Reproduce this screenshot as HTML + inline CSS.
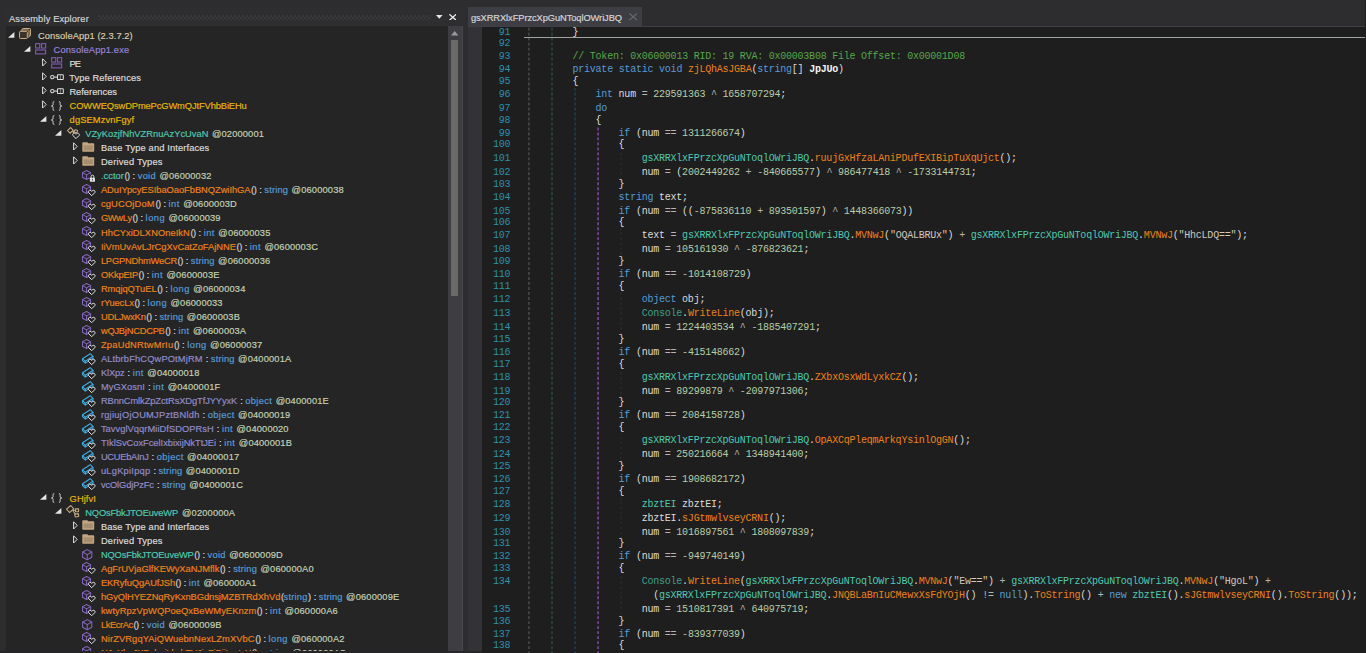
<!DOCTYPE html>
<html><head><meta charset="utf-8"><title>dnSpy</title>
<style>
html,body{margin:0;padding:0}
body{width:1366px;height:653px;overflow:hidden;background:#2d2d30;position:relative;font-family:"Liberation Sans",sans-serif}
div,span,svg{position:absolute}
.t{-webkit-text-stroke:0.18px;white-space:pre;font-size:9.3px;line-height:14px;height:14px;top:0.6px}
.i{overflow:visible}
.r{left:0;width:447px;height:14px}
.cl{left:0;white-space:pre;font-family:"Liberation Mono",monospace;font-size:10.0px;line-height:13px;height:13px;letter-spacing:-0.23px;color:#dcdcdc}
.cl b{font-weight:bold;color:#f4f4f4}
.cl i{font-style:normal}
.n{left:14.3px;width:28.5px;text-align:right;color:#2b91af}
.c{white-space:pre}
.g{width:1.4px;background-size:1.4px 5px}
</style></head><body>
<svg width="0" height="0" style="left:-10px"><defs>
<symbol id="i-asm" viewBox="0 0 12 11" overflow="visible"><g fill="none" stroke="#c9ad84" stroke-width="1"><path d="M3.4 2.1V1.2Q3.4 0.5 4.1 0.5H10.8Q11.5 0.5 11.5 1.2V7.4Q11.5 8.1 10.8 8.1H10"/><path d="M1.9 3.3V2.7Q1.9 2 2.6 2H9.3Q10 2 10 2.7V8.6Q10 9.3 9.3 9.3H8.6"/><rect x="0.5" y="3.4" width="7.8" height="7.1" rx="0.9" fill="#3b3229"/></g></symbol>
<symbol id="i-mod" viewBox="0 0 11.4 11.6" overflow="visible"><g fill="none" stroke="#7f5bb2" stroke-width="1.1"><rect x="0.65" y="0.65" width="4.1" height="4.4"/><rect x="6.55" y="0.65" width="4.1" height="4.4"/><rect x="0.65" y="7" width="10" height="3.9"/></g></symbol>
<symbol id="i-ref" viewBox="0 0 14 6" overflow="visible"><g fill="none" stroke="#dadada" stroke-width="1.05"><circle cx="2.3" cy="3.1" r="1.7"/><path d="M4 3.1H7.4"/><rect x="7.5" y="0.7" width="5.8" height="4.7" rx="0.5"/><path d="M10.4 0.7V5.4" stroke-width="0.7" opacity=".7"/></g></symbol>
<symbol id="i-ns" viewBox="0 0 11.2 10" overflow="visible"><g fill="none" stroke="#d4d4d4" stroke-width="1"><path d="M3.3 0.5C1.7 0.5 2.1 2 2.1 3.2C2.1 4.4 1.5 5 0.4 5C1.5 5 2.1 5.6 2.1 6.8C2.1 8 1.7 9.5 3.3 9.5"/><path d="M7.9 0.5C9.5 0.5 9.1 2 9.1 3.2C9.1 4.4 9.7 5 10.8 5C9.7 5 9.1 5.6 9.1 6.8C9.1 8 9.5 9.5 7.9 9.5"/></g></symbol>
<symbol id="i-cls" viewBox="0 0 13 12.4" overflow="visible"><g fill="none" stroke="#c9ad84" stroke-width="1.05" stroke-linejoin="round"><path d="M0.5 4.1L4.8 0.5L7.8 3.8L3.5 7.5Z"/><path d="M6.5 5.4L9.5 5.3M7 6L9.6 9.4"/><rect x="9.5" y="3.9" width="3.1" height="2.8" rx="0.4"/><rect x="8.9" y="8.9" width="3.7" height="2.9" rx="0.4" transform="rotate(-12 10.7 10.3)"/></g></symbol>
<symbol id="i-clsh" viewBox="0 0 13 12" overflow="visible"><g fill="none" stroke="#c9ad84" stroke-width="1.05"><path d="M0.5 3.6L3.6 0.6L6.2 3.2L3.1 6.2Z"/><path d="M5.2 4.2L7.4 4.8M6 5L7 7"/><rect x="7.5" y="2.9" width="2.8" height="2.6" rx="0.5" transform="rotate(14 8.9 4.2)"/></g><path d="M9 11.6L5.9 8.5C5.1 7.5 6.1 5.9 7.5 6.2C8.3 6.4 9 7.2 9 7.2C9 7.2 9.7 6.4 10.5 6.2C11.9 5.9 12.9 7.5 12.1 8.5Z" fill="#252526" stroke="#e2e2e2" stroke-width="1"/></symbol>
<symbol id="i-fold" viewBox="0 0 12.4 10" overflow="visible"><path d="M0.3 1.1Q0.3 0.3 1.1 0.3H5.2Q5.9 0.3 6.1 1.3H11.4Q12.2 1.3 12.2 2.1V9Q12.2 9.8 11.4 9.8H1.1Q0.3 9.8 0.3 9Z" fill="#c2a680"/><rect x="1.7" y="3.4" width="9.2" height="4.8" fill="#a0886a" opacity=".8"/></symbol>
<symbol id="i-m" viewBox="0 0 13.4 12" overflow="visible"><g fill="none" stroke="#8466bc" stroke-width="1.05" stroke-linejoin="round"><path d="M4.55 0.5L8.6 2.6V7.3L4.55 9.5L0.5 7.3V2.6Z"/><path d="M0.5 2.6L4.55 4.9L8.6 2.6M4.55 4.9V9.5"/></g></symbol>
<symbol id="i-mh" viewBox="0 0 13.4 12" overflow="visible"><use href="#i-m"/><path d="M9.7 11.7L6.6 8.6C5.8 7.6 6.8 6 8.2 6.3C9 6.5 9.7 7.3 9.7 7.3C9.7 7.3 10.4 6.5 11.2 6.3C12.6 6 13.6 7.6 12.8 8.6Z" fill="#252526" stroke="#e2e2e2" stroke-width="1"/></symbol>
<symbol id="i-mlock" viewBox="0 0 13.4 12" overflow="visible"><use href="#i-m"/><rect x="7.3" y="4.4" width="6.1" height="7.6" fill="#252526"/><path d="M9.1 8V6.5A1.35 1.35 0 0 1 11.8 6.5V8" fill="none" stroke="#e2e2e2" stroke-width="1"/><rect x="7.9" y="7.8" width="5.1" height="3.9" rx="0.4" fill="#e2e2e2"/><rect x="10" y="8.9" width="0.9" height="1.6" fill="#444"/></symbol>
<symbol id="i-fh" viewBox="0 0 13.4 12" overflow="visible"><g fill="none" stroke="#3fa9de" stroke-width="1.1" stroke-linejoin="round"><path d="M0.5 5.7L8.2 0.7L11 3.3L3.3 8.3Z"/><path d="M0.5 5.7V7.6L3.3 10.1V8.3M3.3 10.1L11 5.2V3.3"/></g><path d="M9.7 11.7L6.6 8.6C5.8 7.6 6.8 6 8.2 6.3C9 6.5 9.7 7.3 9.7 7.3C9.7 7.3 10.4 6.5 11.2 6.3C12.6 6 13.6 7.6 12.8 8.6Z" fill="#252526" stroke="#e2e2e2" stroke-width="1"/></symbol>
<symbol id="i-mbig" viewBox="0 0 10.4 11.4" overflow="visible"><g fill="none" stroke="#8466bc" stroke-width="1.05" stroke-linejoin="round"><path d="M5.2 0.6L9.8 3V8.3L5.2 10.8L0.6 8.3V3Z"/><path d="M0.6 3L5.2 5.6L9.8 3M5.2 5.6V10.8"/></g></symbol>
</defs>
</svg>
<div style="left:5.5px;top:7px;width:457px;height:19.5px;background:#2e2e31"></div>
<div style="left:5.5px;top:26.3px;width:442px;height:625px;background:#252526;overflow:hidden" id="tree">
<div class="r" style="top:2.2px"><svg class="i" style="left:2.2px;top:3.1px" width="6.4" height="5.8"><path d="M6.4 0V5.8H0Z" fill="#e4e4e4"/></svg><svg class="i" style="left:13.8px;top:-0.1px" width="12" height="11"><use href="#i-asm"/></svg><span class="t" style="left:32.5px;color:#dacaa8;letter-spacing:0.084px">ConsoleApp1 (2.3.7.2)</span></div>
<div class="r" style="top:16.2px"><svg class="i" style="left:18.3px;top:3.1px" width="6.4" height="5.8"><path d="M6.4 0V5.8H0Z" fill="#e4e4e4"/></svg><svg class="i" style="left:29.9px;top:0.7px" width="11.4" height="11.6"><use href="#i-mod"/></svg><span class="t" style="left:48.1px;color:#9683d8;letter-spacing:0.153px">ConsoleApp1.exe</span></div>
<div class="r" style="top:30.2px"><svg class="i" style="left:36.3px;top:1.8px" width="5" height="9"><path d="M0.6 0.8L4.2 4.4L0.6 8Z" fill="none" stroke="#e0e0e0" stroke-width="1"/></svg><svg class="i" style="left:45.7px;top:0.7px" width="11.4" height="11.6"><use href="#i-mod"/></svg><span class="t" style="left:63.9px;color:#dcdcdc;letter-spacing:-0.803px">PE</span></div>
<div class="r" style="top:44.2px"><svg class="i" style="left:36.3px;top:1.8px" width="5" height="9"><path d="M0.6 0.8L4.2 4.4L0.6 8Z" fill="none" stroke="#e0e0e0" stroke-width="1"/></svg><svg class="i" style="left:44.7px;top:3.1px" width="14" height="6"><use href="#i-ref"/></svg><span class="t" style="left:63.7px;color:#dcdcdc;letter-spacing:0.095px">Type References</span></div>
<div class="r" style="top:58.3px"><svg class="i" style="left:36.3px;top:1.8px" width="5" height="9"><path d="M0.6 0.8L4.2 4.4L0.6 8Z" fill="none" stroke="#e0e0e0" stroke-width="1"/></svg><svg class="i" style="left:44.7px;top:3.1px" width="14" height="6"><use href="#i-ref"/></svg><span class="t" style="left:63.9px;color:#dcdcdc;letter-spacing:0.005px">References</span></div>
<div class="r" style="top:72.3px"><svg class="i" style="left:36.3px;top:1.8px" width="5" height="9"><path d="M0.6 0.8L4.2 4.4L0.6 8Z" fill="none" stroke="#e0e0e0" stroke-width="1"/></svg><svg class="i" style="left:45.8px;top:2.0px" width="11.2" height="10"><use href="#i-ns"/></svg><span class="t" style="left:64.1px;color:#e6b800;letter-spacing:-0.092px">COWWEQswDPmePcGWmQJtFVhbBiEHu</span></div>
<div class="r" style="top:86.3px"><svg class="i" style="left:34.1px;top:3.1px" width="6.4" height="5.8"><path d="M6.4 0V5.8H0Z" fill="#e4e4e4"/></svg><svg class="i" style="left:45.8px;top:2.0px" width="11.2" height="10"><use href="#i-ns"/></svg><span class="t" style="left:64.1px;color:#e6b800;letter-spacing:0.129px">dgSEMzvnFgyf</span></div>
<div class="r" style="top:100.3px"><svg class="i" style="left:49.9px;top:3.1px" width="6.4" height="5.8"><path d="M6.4 0V5.8H0Z" fill="#e4e4e4"/></svg><svg class="i" style="left:61.2px;top:0.8px" width="13" height="12"><use href="#i-clsh"/></svg><span class="t" style="left:79.7px;color:#4ec9b0;letter-spacing:0.010px">VZyKozjfNhVZRnuAzYcUvaN</span><span class="t" style="left:206.4px;color:#c2d2b4;letter-spacing:0.154px">@02000001</span></div>
<div class="r" style="top:114.3px"><svg class="i" style="left:67.7px;top:1.8px" width="5" height="9"><path d="M0.6 0.8L4.2 4.4L0.6 8Z" fill="none" stroke="#e0e0e0" stroke-width="1"/></svg><svg class="i" style="left:76.7px;top:1.4px" width="12.4" height="10"><use href="#i-fold"/></svg><span class="t" style="left:95.4px;color:#dcdcdc;letter-spacing:0.135px">Base Type and Interfaces</span></div>
<div class="r" style="top:128.3px"><svg class="i" style="left:67.7px;top:1.8px" width="5" height="9"><path d="M0.6 0.8L4.2 4.4L0.6 8Z" fill="none" stroke="#e0e0e0" stroke-width="1"/></svg><svg class="i" style="left:76.7px;top:1.4px" width="12.4" height="10"><use href="#i-fold"/></svg><span class="t" style="left:95.4px;color:#dcdcdc;letter-spacing:0.195px">Derived Types</span></div>
<div class="r" style="top:142.3px"><svg class="i" style="left:76.7px;top:1.3px" width="13.4" height="12"><use href="#i-mlock"/></svg><span class="t" style="left:95.4px;color:#4ec9b0;letter-spacing:0.044px">.cctor</span><span class="t" style="left:119.0px;color:#cfcfcf;letter-spacing:-0.502px">()</span><span class="t" style="left:127.1px;color:#dcdcdc;letter-spacing:-0.994px">:</span><span class="t" style="left:132.2px;color:#569cd6;letter-spacing:0.309px">void</span><span class="t" style="left:153.9px;color:#c2d2b4;letter-spacing:0.154px">@06000032</span></div>
<div class="r" style="top:156.4px"><svg class="i" style="left:76.7px;top:1.3px" width="13.4" height="12"><use href="#i-mh"/></svg><span class="t" style="left:95.4px;color:#ee8216;letter-spacing:-0.021px">ADuIYpcyESIbaOaoFbBNQZwiIhGA</span><span class="t" style="left:245.6px;color:#cfcfcf;letter-spacing:-0.502px">()</span><span class="t" style="left:253.7px;color:#dcdcdc;letter-spacing:-0.994px">:</span><span class="t" style="left:258.8px;color:#569cd6;letter-spacing:0.194px">string</span><span class="t" style="left:286.1px;color:#c2d2b4;letter-spacing:0.154px">@06000038</span></div>
<div class="r" style="top:170.5px"><svg class="i" style="left:76.7px;top:1.3px" width="13.4" height="12"><use href="#i-mh"/></svg><span class="t" style="left:95.4px;color:#ee8216;letter-spacing:0.190px">cgUCOjDoM</span><span class="t" style="left:149.9px;color:#cfcfcf;letter-spacing:-0.502px">()</span><span class="t" style="left:158.0px;color:#dcdcdc;letter-spacing:-0.994px">:</span><span class="t" style="left:163.1px;color:#569cd6;letter-spacing:0.457px">int</span><span class="t" style="left:177.7px;color:#c2d2b4;letter-spacing:0.154px">@0600003D</span></div>
<div class="r" style="top:184.6px"><svg class="i" style="left:76.7px;top:1.3px" width="13.4" height="12"><use href="#i-mh"/></svg><span class="t" style="left:95.4px;color:#ee8216;letter-spacing:-0.261px">GWwLy</span><span class="t" style="left:126.9px;color:#cfcfcf;letter-spacing:-0.502px">()</span><span class="t" style="left:135.0px;color:#dcdcdc;letter-spacing:-0.994px">:</span><span class="t" style="left:140.1px;color:#569cd6;letter-spacing:0.480px">long</span><span class="t" style="left:163.0px;color:#c2d2b4;letter-spacing:0.154px">@06000039</span></div>
<div class="r" style="top:198.7px"><svg class="i" style="left:76.7px;top:1.3px" width="13.4" height="12"><use href="#i-mh"/></svg><span class="t" style="left:95.4px;color:#ee8216;letter-spacing:0.072px">HhCYxiDLXNOneIkN</span><span class="t" style="left:185.0px;color:#cfcfcf;letter-spacing:-0.502px">()</span><span class="t" style="left:193.1px;color:#dcdcdc;letter-spacing:-0.994px">:</span><span class="t" style="left:198.2px;color:#569cd6;letter-spacing:0.457px">int</span><span class="t" style="left:212.8px;color:#c2d2b4;letter-spacing:0.154px">@06000035</span></div>
<div class="r" style="top:212.7px"><svg class="i" style="left:76.7px;top:1.3px" width="13.4" height="12"><use href="#i-mh"/></svg><span class="t" style="left:95.4px;color:#ee8216;letter-spacing:0.016px">IiVmUvAvLJrCgXvCatZoFAjNNE</span><span class="t" style="left:231.1px;color:#cfcfcf;letter-spacing:-0.502px">()</span><span class="t" style="left:239.2px;color:#dcdcdc;letter-spacing:-0.994px">:</span><span class="t" style="left:244.3px;color:#569cd6;letter-spacing:0.457px">int</span><span class="t" style="left:258.9px;color:#c2d2b4;letter-spacing:0.154px">@0600003C</span></div>
<div class="r" style="top:226.8px"><svg class="i" style="left:76.7px;top:1.3px" width="13.4" height="12"><use href="#i-mh"/></svg><span class="t" style="left:95.4px;color:#ee8216;letter-spacing:-0.188px">LPGPNDhmWeCR</span><span class="t" style="left:172.1px;color:#cfcfcf;letter-spacing:-0.502px">()</span><span class="t" style="left:180.2px;color:#dcdcdc;letter-spacing:-0.994px">:</span><span class="t" style="left:185.3px;color:#569cd6;letter-spacing:0.194px">string</span><span class="t" style="left:212.6px;color:#c2d2b4;letter-spacing:0.154px">@06000036</span></div>
<div class="r" style="top:240.9px"><svg class="i" style="left:76.7px;top:1.3px" width="13.4" height="12"><use href="#i-mh"/></svg><span class="t" style="left:95.4px;color:#ee8216;letter-spacing:-0.164px">OKkpEtP</span><span class="t" style="left:133.1px;color:#cfcfcf;letter-spacing:-0.502px">()</span><span class="t" style="left:141.2px;color:#dcdcdc;letter-spacing:-0.994px">:</span><span class="t" style="left:146.3px;color:#569cd6;letter-spacing:0.457px">int</span><span class="t" style="left:160.9px;color:#c2d2b4;letter-spacing:0.154px">@0600003E</span></div>
<div class="r" style="top:255.0px"><svg class="i" style="left:76.7px;top:1.3px" width="13.4" height="12"><use href="#i-mh"/></svg><span class="t" style="left:95.4px;color:#ee8216;letter-spacing:-0.028px">RmqjqQTuEL</span><span class="t" style="left:151.7px;color:#cfcfcf;letter-spacing:-0.502px">()</span><span class="t" style="left:159.8px;color:#dcdcdc;letter-spacing:-0.994px">:</span><span class="t" style="left:164.9px;color:#569cd6;letter-spacing:0.480px">long</span><span class="t" style="left:187.8px;color:#c2d2b4;letter-spacing:0.154px">@06000034</span></div>
<div class="r" style="top:269.1px"><svg class="i" style="left:76.7px;top:1.3px" width="13.4" height="12"><use href="#i-mh"/></svg><span class="t" style="left:95.4px;color:#ee8216;letter-spacing:-0.099px">rYuecLx</span><span class="t" style="left:128.9px;color:#cfcfcf;letter-spacing:-0.502px">()</span><span class="t" style="left:137.0px;color:#dcdcdc;letter-spacing:-0.994px">:</span><span class="t" style="left:142.1px;color:#569cd6;letter-spacing:0.480px">long</span><span class="t" style="left:165.0px;color:#c2d2b4;letter-spacing:0.154px">@06000033</span></div>
<div class="r" style="top:283.1px"><svg class="i" style="left:76.7px;top:1.3px" width="13.4" height="12"><use href="#i-mh"/></svg><span class="t" style="left:95.4px;color:#ee8216;letter-spacing:-0.148px">UDLJwxKn</span><span class="t" style="left:140.8px;color:#cfcfcf;letter-spacing:-0.502px">()</span><span class="t" style="left:148.9px;color:#dcdcdc;letter-spacing:-0.994px">:</span><span class="t" style="left:154.0px;color:#569cd6;letter-spacing:0.194px">string</span><span class="t" style="left:181.3px;color:#c2d2b4;letter-spacing:0.154px">@0600003B</span></div>
<div class="r" style="top:297.2px"><svg class="i" style="left:76.7px;top:1.3px" width="13.4" height="12"><use href="#i-mh"/></svg><span class="t" style="left:95.4px;color:#ee8216;letter-spacing:-0.220px">wQJBjNCDCPB</span><span class="t" style="left:159.7px;color:#cfcfcf;letter-spacing:-0.502px">()</span><span class="t" style="left:167.8px;color:#dcdcdc;letter-spacing:-0.994px">:</span><span class="t" style="left:172.9px;color:#569cd6;letter-spacing:0.457px">int</span><span class="t" style="left:187.5px;color:#c2d2b4;letter-spacing:0.154px">@0600003A</span></div>
<div class="r" style="top:311.3px"><svg class="i" style="left:76.7px;top:1.3px" width="13.4" height="12"><use href="#i-mh"/></svg><span class="t" style="left:95.4px;color:#ee8216;letter-spacing:0.251px">ZpaUdNRtwMrIu</span><span class="t" style="left:168.5px;color:#cfcfcf;letter-spacing:-0.502px">()</span><span class="t" style="left:176.6px;color:#dcdcdc;letter-spacing:-0.994px">:</span><span class="t" style="left:181.7px;color:#569cd6;letter-spacing:0.480px">long</span><span class="t" style="left:204.6px;color:#c2d2b4;letter-spacing:0.154px">@06000037</span></div>
<div class="r" style="top:325.4px"><svg class="i" style="left:76.7px;top:1.3px" width="13.4" height="12"><use href="#i-fh"/></svg><span class="t" style="left:95.4px;color:#938cc8;letter-spacing:0.145px">ALtbrbFhCQwPOtMjRM</span><span class="t" style="left:200.2px;color:#dcdcdc;letter-spacing:-0.994px">:</span><span class="t" style="left:205.3px;color:#569cd6;letter-spacing:0.194px">string</span><span class="t" style="left:232.6px;color:#c2d2b4;letter-spacing:0.154px">@0400001A</span></div>
<div class="r" style="top:339.5px"><svg class="i" style="left:76.7px;top:1.3px" width="13.4" height="12"><use href="#i-fh"/></svg><span class="t" style="left:95.4px;color:#938cc8;letter-spacing:-0.119px">KlXpz</span><span class="t" style="left:122.1px;color:#dcdcdc;letter-spacing:-0.994px">:</span><span class="t" style="left:127.2px;color:#569cd6;letter-spacing:0.457px">int</span><span class="t" style="left:141.8px;color:#c2d2b4;letter-spacing:0.154px">@04000018</span></div>
<div class="r" style="top:353.5px"><svg class="i" style="left:76.7px;top:1.3px" width="13.4" height="12"><use href="#i-fh"/></svg><span class="t" style="left:95.4px;color:#938cc8;letter-spacing:0.087px">MyGXosnI</span><span class="t" style="left:142.5px;color:#dcdcdc;letter-spacing:-0.994px">:</span><span class="t" style="left:147.6px;color:#569cd6;letter-spacing:0.457px">int</span><span class="t" style="left:162.2px;color:#c2d2b4;letter-spacing:0.154px">@0400001F</span></div>
<div class="r" style="top:367.5px"><svg class="i" style="left:76.7px;top:1.3px" width="13.4" height="12"><use href="#i-fh"/></svg><span class="t" style="left:95.4px;color:#938cc8;letter-spacing:-0.083px">RBnnCmlkZpZctRsXDgTfJYYyxK</span><span class="t" style="left:234.7px;color:#dcdcdc;letter-spacing:-0.994px">:</span><span class="t" style="left:239.8px;color:#569cd6;letter-spacing:0.365px">object</span><span class="t" style="left:270.2px;color:#c2d2b4;letter-spacing:0.154px">@0400001E</span></div>
<div class="r" style="top:381.5px"><svg class="i" style="left:76.7px;top:1.3px" width="13.4" height="12"><use href="#i-fh"/></svg><span class="t" style="left:95.4px;color:#938cc8;letter-spacing:0.233px">rgjiujOjOUMJPztBNldh</span><span class="t" style="left:197.1px;color:#dcdcdc;letter-spacing:-0.994px">:</span><span class="t" style="left:202.2px;color:#569cd6;letter-spacing:0.365px">object</span><span class="t" style="left:232.6px;color:#c2d2b4;letter-spacing:0.154px">@04000019</span></div>
<div class="r" style="top:395.5px"><svg class="i" style="left:76.7px;top:1.3px" width="13.4" height="12"><use href="#i-fh"/></svg><span class="t" style="left:95.4px;color:#938cc8;letter-spacing:0.059px">TavvglVqqrMiiDfSDOPRsH</span><span class="t" style="left:211.3px;color:#dcdcdc;letter-spacing:-0.994px">:</span><span class="t" style="left:216.4px;color:#569cd6;letter-spacing:0.457px">int</span><span class="t" style="left:231.0px;color:#c2d2b4;letter-spacing:0.154px">@04000020</span></div>
<div class="r" style="top:409.5px"><svg class="i" style="left:76.7px;top:1.3px" width="13.4" height="12"><use href="#i-fh"/></svg><span class="t" style="left:95.4px;color:#938cc8;letter-spacing:-0.019px">TIklSvCoxFcelIxbixijNkTtJEi</span><span class="t" style="left:213.6px;color:#dcdcdc;letter-spacing:-0.994px">:</span><span class="t" style="left:218.7px;color:#569cd6;letter-spacing:0.457px">int</span><span class="t" style="left:233.3px;color:#c2d2b4;letter-spacing:0.154px">@0400001B</span></div>
<div class="r" style="top:422.7px"><svg class="i" style="left:76.7px;top:1.3px" width="13.4" height="12"><use href="#i-fh"/></svg><span class="t" style="left:95.4px;color:#938cc8;letter-spacing:-0.269px">UCUEbAInJ</span><span class="t" style="left:146.1px;color:#dcdcdc;letter-spacing:-0.994px">:</span><span class="t" style="left:151.2px;color:#569cd6;letter-spacing:0.365px">object</span><span class="t" style="left:181.6px;color:#c2d2b4;letter-spacing:0.154px">@04000017</span></div>
<div class="r" style="top:436.7px"><svg class="i" style="left:76.7px;top:1.3px" width="13.4" height="12"><use href="#i-fh"/></svg><span class="t" style="left:95.4px;color:#938cc8;letter-spacing:0.245px">uLgKpiIpqp</span><span class="t" style="left:147.9px;color:#dcdcdc;letter-spacing:-0.994px">:</span><span class="t" style="left:153.0px;color:#569cd6;letter-spacing:0.194px">string</span><span class="t" style="left:180.3px;color:#c2d2b4;letter-spacing:0.154px">@0400001D</span></div>
<div class="r" style="top:450.7px"><svg class="i" style="left:76.7px;top:1.3px" width="13.4" height="12"><use href="#i-fh"/></svg><span class="t" style="left:95.4px;color:#938cc8;letter-spacing:-0.114px">vcOlGdjPzFc</span><span class="t" style="left:151.4px;color:#dcdcdc;letter-spacing:-0.994px">:</span><span class="t" style="left:156.5px;color:#569cd6;letter-spacing:0.194px">string</span><span class="t" style="left:183.8px;color:#c2d2b4;letter-spacing:0.154px">@0400001C</span></div>
<div class="r" style="top:464.7px"><svg class="i" style="left:34.1px;top:3.1px" width="6.4" height="5.8"><path d="M6.4 0V5.8H0Z" fill="#e4e4e4"/></svg><svg class="i" style="left:45.8px;top:2.0px" width="11.2" height="10"><use href="#i-ns"/></svg><span class="t" style="left:64.1px;color:#e6b800;letter-spacing:0.079px">GHjfvI</span></div>
<div class="r" style="top:478.7px"><svg class="i" style="left:49.9px;top:3.1px" width="6.4" height="5.8"><path d="M6.4 0V5.8H0Z" fill="#e4e4e4"/></svg><svg class="i" style="left:60.3px;top:0.5px" width="13" height="12.4"><use href="#i-cls"/></svg><span class="t" style="left:79.7px;color:#4ec9b0;letter-spacing:-0.124px">NQOsFbkJTOEuveWP</span><span class="t" style="left:176.5px;color:#c2d2b4;letter-spacing:0.154px">@0200000A</span></div>
<div class="r" style="top:492.7px"><svg class="i" style="left:67.7px;top:1.8px" width="5" height="9"><path d="M0.6 0.8L4.2 4.4L0.6 8Z" fill="none" stroke="#e0e0e0" stroke-width="1"/></svg><svg class="i" style="left:76.7px;top:1.4px" width="12.4" height="10"><use href="#i-fold"/></svg><span class="t" style="left:95.4px;color:#dcdcdc;letter-spacing:0.135px">Base Type and Interfaces</span></div>
<div class="r" style="top:506.7px"><svg class="i" style="left:67.7px;top:1.8px" width="5" height="9"><path d="M0.6 0.8L4.2 4.4L0.6 8Z" fill="none" stroke="#e0e0e0" stroke-width="1"/></svg><svg class="i" style="left:76.7px;top:1.4px" width="12.4" height="10"><use href="#i-fold"/></svg><span class="t" style="left:95.4px;color:#dcdcdc;letter-spacing:0.195px">Derived Types</span></div>
<div class="r" style="top:520.8px"><svg class="i" style="left:76.7px;top:1.8px" width="10.4" height="11.4"><use href="#i-mbig"/></svg><span class="t" style="left:95.4px;color:#4ec9b0;letter-spacing:-0.131px">NQOsFbkJTOEuveWP</span><span class="t" style="left:188.8px;color:#cfcfcf;letter-spacing:-0.502px">()</span><span class="t" style="left:196.9px;color:#dcdcdc;letter-spacing:-0.994px">:</span><span class="t" style="left:202.0px;color:#569cd6;letter-spacing:0.309px">void</span><span class="t" style="left:223.7px;color:#c2d2b4;letter-spacing:0.154px">@0600009D</span></div>
<div class="r" style="top:534.8px"><svg class="i" style="left:76.7px;top:1.3px" width="13.4" height="12"><use href="#i-mh"/></svg><span class="t" style="left:95.4px;color:#ee8216;letter-spacing:0.035px">AgFrUVjaGlfKEWyXaNJMflk</span><span class="t" style="left:214.5px;color:#cfcfcf;letter-spacing:-0.502px">()</span><span class="t" style="left:222.6px;color:#dcdcdc;letter-spacing:-0.994px">:</span><span class="t" style="left:227.7px;color:#569cd6;letter-spacing:0.194px">string</span><span class="t" style="left:255.0px;color:#c2d2b4;letter-spacing:0.154px">@060000A0</span></div>
<div class="r" style="top:548.8px"><svg class="i" style="left:76.7px;top:1.3px" width="13.4" height="12"><use href="#i-mh"/></svg><span class="t" style="left:95.4px;color:#ee8216;letter-spacing:-0.096px">EKRyfuQgAUfJSh</span><span class="t" style="left:170.1px;color:#cfcfcf;letter-spacing:-0.502px">()</span><span class="t" style="left:178.2px;color:#dcdcdc;letter-spacing:-0.994px">:</span><span class="t" style="left:183.3px;color:#569cd6;letter-spacing:0.457px">int</span><span class="t" style="left:197.9px;color:#c2d2b4;letter-spacing:0.154px">@060000A1</span></div>
<div class="r" style="top:562.8px"><svg class="i" style="left:76.7px;top:1.3px" width="13.4" height="12"><use href="#i-mh"/></svg><span class="t" style="left:95.4px;color:#ee8216;letter-spacing:-0.045px">hGyQlHYEZNqRyKxnBGdnsjMZBTRdXhVd</span><span class="t" style="left:275.4px;color:#cfcfcf;letter-spacing:-0.809px">(</span><span class="t" style="left:278.1px;color:#569cd6;letter-spacing:0.194px">string</span><span class="t" style="left:302.5px;color:#cfcfcf;letter-spacing:-0.809px">)</span><span class="t" style="left:308.2px;color:#dcdcdc;letter-spacing:-0.994px">:</span><span class="t" style="left:313.3px;color:#569cd6;letter-spacing:0.194px">string</span><span class="t" style="left:340.6px;color:#c2d2b4;letter-spacing:0.154px">@0600009E</span></div>
<div class="r" style="top:576.8px"><svg class="i" style="left:76.7px;top:1.3px" width="13.4" height="12"><use href="#i-mh"/></svg><span class="t" style="left:95.4px;color:#ee8216;letter-spacing:0.072px">kwtyRpzVpWQPoeQxBeWMyEKnzm</span><span class="t" style="left:251.3px;color:#cfcfcf;letter-spacing:-0.502px">()</span><span class="t" style="left:259.4px;color:#dcdcdc;letter-spacing:-0.994px">:</span><span class="t" style="left:264.5px;color:#569cd6;letter-spacing:0.457px">int</span><span class="t" style="left:279.1px;color:#c2d2b4;letter-spacing:0.154px">@060000A6</span></div>
<div class="r" style="top:590.8px"><svg class="i" style="left:76.7px;top:1.8px" width="10.4" height="11.4"><use href="#i-mbig"/></svg><span class="t" style="left:95.4px;color:#ee8216;letter-spacing:-0.375px">LkEcrAc</span><span class="t" style="left:128.0px;color:#cfcfcf;letter-spacing:-0.502px">()</span><span class="t" style="left:136.1px;color:#dcdcdc;letter-spacing:-0.994px">:</span><span class="t" style="left:141.2px;color:#569cd6;letter-spacing:0.309px">void</span><span class="t" style="left:162.9px;color:#c2d2b4;letter-spacing:0.154px">@0600009B</span></div>
<div class="r" style="top:604.8px"><svg class="i" style="left:76.7px;top:1.3px" width="13.4" height="12"><use href="#i-mh"/></svg><span class="t" style="left:95.4px;color:#ee8216;letter-spacing:0.121px">NirZVRgqYAiQWuebnNexLZmXVbC</span><span class="t" style="left:249.8px;color:#cfcfcf;letter-spacing:-0.502px">()</span><span class="t" style="left:257.9px;color:#dcdcdc;letter-spacing:-0.994px">:</span><span class="t" style="left:263.0px;color:#569cd6;letter-spacing:0.480px">long</span><span class="t" style="left:285.9px;color:#c2d2b4;letter-spacing:0.154px">@060000A2</span></div>
<div class="r" style="top:618.9px"><svg class="i" style="left:76.7px;top:1.3px" width="13.4" height="12"><use href="#i-mh"/></svg><span class="t" style="left:95.4px;color:#ee8216;letter-spacing:-0.131px">NJeXlmJXPahujLkchTVJjvFiBijLmtzY</span><span class="t" style="left:246.3px;color:#cfcfcf;letter-spacing:-0.502px">()</span><span class="t" style="left:254.4px;color:#dcdcdc;letter-spacing:-0.994px">:</span><span class="t" style="left:259.5px;color:#569cd6;letter-spacing:0.194px">string</span><span class="t" style="left:286.8px;color:#c2d2b4;letter-spacing:0.154px">@060000A5</span></div>
</div>
<div style="left:0;top:11.1px;width:460px;height:14px"><span class="t" style="left:9.0px;color:#dcdcdc;letter-spacing:0.141px;color:#d4d4d4">Assembly Explorer</span></div>
<div style="left:97.5px;top:15px;width:333px;height:5px;opacity:.38;background-image:radial-gradient(circle at 1px 1px,#5a5a5e 0.6px,transparent 0.9px),radial-gradient(circle at 1px 1px,#5a5a5e 0.6px,transparent 0.9px);background-size:4px 4px,4px 4px;background-position:0 0,2px 2px"></div>
<svg style="left:436.2px;top:15.2px" width="6.6" height="3.8"><path d="M0 0H6.6L3.3 3.8Z" fill="#e6e6e6"/></svg>
<svg style="left:448.8px;top:13.7px" width="7.6" height="6.6"><path d="M0.4 0.3L7.2 6.3M7.2 0.3L0.4 6.3" stroke="#f2f2f2" stroke-width="1.25" fill="none"/></svg>
<div style="left:447.5px;top:26.3px;width:15px;height:625px;background:#3e3e42"></div>
<div style="left:461.6px;top:26.3px;width:0.9px;height:625px;background:#47474c"></div>
<svg style="left:451px;top:31px" width="7.4" height="4.6"><path d="M0 4.6L3.7 0L7.4 4.6Z" fill="#9a9a9e"/></svg>
<div style="left:450.9px;top:40px;width:7.2px;height:256px;background:#6a6a6a"></div>
<div style="left:467.5px;top:7px;width:174px;height:19.5px;background:#3d3d44"></div>
<div style="left:467.5px;top:25.7px;width:899px;height:1px;background:#3f3f48"></div>
<div style="left:0;top:10.5px;width:700px;height:14px"><span class="t" style="left:470.9px;color:#dcdcdc;letter-spacing:-0.075px;color:#d6d6d6">gsXRRXlxFPrzcXpGuNToqlOWriJBQ</span></div>
<svg style="left:629.3px;top:13px" width="8.4" height="7.6"><path d="M0.4 0.4L8 7.2M8 0.4L0.4 7.2" stroke="#6c6c70" stroke-width="1.1" fill="none"/></svg>
<div style="left:467.5px;top:26.6px;width:899px;height:627px;background:#1e1e1e;overflow:hidden" id="ed">
<div style="left:0;top:0;width:14.3px;height:627px;background:#333337"></div>
<svg style="left:0;top:0" width="899" height="627"><line x1="60.90" x2="60.90" y1="0.00" y2="626.40" stroke="#484848" stroke-width="1.6" stroke-dasharray="2.9 2.087" stroke-dashoffset="4.237"/><line x1="84.00" x2="84.00" y1="0.00" y2="626.40" stroke="#224d42" stroke-width="1.6" stroke-dasharray="2.9 2.087" stroke-dashoffset="4.237"/><line x1="107.10" x2="107.10" y1="60.90" y2="626.40" stroke="#1f3e51" stroke-width="1.6" stroke-dasharray="2.9 2.087" stroke-dashoffset="0.306"/><line x1="130.10" x2="130.10" y1="99.30" y2="626.40" stroke="#7e489a" stroke-width="1.6" stroke-dasharray="2.9 2.087" stroke-dashoffset="3.797"/><line x1="153.30" x2="153.30" y1="124.40" y2="151.40" stroke="#2c2720" stroke-width="1.6" stroke-dasharray="2.9 2.087" stroke-dashoffset="3.962"/><line x1="153.30" x2="153.30" y1="201.90" y2="228.90" stroke="#2c2720" stroke-width="1.6" stroke-dasharray="2.9 2.087" stroke-dashoffset="1.670"/><line x1="153.30" x2="153.30" y1="265.40" y2="306.90" stroke="#2c2720" stroke-width="1.6" stroke-dasharray="2.9 2.087" stroke-dashoffset="0.339"/><line x1="153.30" x2="153.30" y1="343.40" y2="370.40" stroke="#2c2720" stroke-width="1.6" stroke-dasharray="2.9 2.087" stroke-dashoffset="3.534"/><line x1="153.30" x2="153.30" y1="406.40" y2="433.40" stroke="#2c2720" stroke-width="1.6" stroke-dasharray="2.9 2.087" stroke-dashoffset="1.703"/><line x1="153.30" x2="153.30" y1="470.40" y2="511.40" stroke="#2c2720" stroke-width="1.6" stroke-dasharray="2.9 2.087" stroke-dashoffset="0.872"/><line x1="153.30" x2="153.30" y1="547.90" y2="588.90" stroke="#2c2720" stroke-width="1.6" stroke-dasharray="2.9 2.087" stroke-dashoffset="3.567"/></svg>
<div style="left:56.7px;top:10.5px;width:850px;height:1px;background:#9da59f"></div>
<div class="cl" style="top:-0.7px;width:899px"><span class="n">91</span><span class="c" style="left:105.0px">}</span></div>
<div class="cl" style="top:10.1px;width:899px"><span class="n">92</span></div>
<div class="cl" style="top:23.1px;width:899px"><span class="n">93</span><span class="c" style="left:105.0px"><i style="color:#57a64a">// Token: 0x06000013 RID: 19 RVA: 0x00003B08 File Offset: 0x00001D08</i></span></div>
<div class="cl" style="top:36.9px;width:899px"><span class="n">94</span><span class="c" style="left:105.0px"><i style="color:#569cd6">private static void </i><i style="color:#ee8216">zjLQhAsJGBA</i>(<i style="color:#569cd6">string</i>[] <b>JpJUo</b>)</span></div>
<div class="cl" style="top:48.8px;width:899px"><span class="n">95</span><span class="c" style="left:105.0px">{</span></div>
<div class="cl" style="top:61.9px;width:899px"><span class="n">96</span><span class="c" style="left:128.0px"><i style="color:#569cd6">int</i> num <i style="color:#b4b4b4">=</i> <i style="color:#b5cea8">229591363</i> <i style="color:#b4b4b4">^</i> <i style="color:#b5cea8">1658707294</i>;</span></div>
<div class="cl" style="top:75.6px;width:899px"><span class="n">97</span><span class="c" style="left:128.0px"><i style="color:#569cd6">do</i></span></div>
<div class="cl" style="top:87.3px;width:899px"><span class="n">98</span><span class="c" style="left:128.0px">{</span></div>
<div class="cl" style="top:100.5px;width:899px"><span class="n">99</span><span class="c" style="left:151.1px"><i style="color:#569cd6">if</i> (num <i style="color:#b4b4b4">==</i> <i style="color:#b5cea8">1311266674</i>)</span></div>
<div class="cl" style="top:111.9px;width:899px"><span class="n">100</span><span class="c" style="left:151.1px">{</span></div>
<div class="cl" style="top:125.3px;width:899px"><span class="n">101</span><span class="c" style="left:174.2px"><i style="color:#4ec9b0">gsXRRXlxFPrzcXpGuNToqlOWriJBQ</i>.<i style="color:#ee8216">ruujGxHfzaLAniPDufEXIBipTuXqUjct</i>();</span></div>
<div class="cl" style="top:139.2px;width:899px"><span class="n">102</span><span class="c" style="left:174.2px">num <i style="color:#b4b4b4">=</i> (<i style="color:#b5cea8">2002449262</i> <i style="color:#b4b4b4">+</i> <i style="color:#b4b4b4">-</i><i style="color:#b5cea8">840665577</i>) <i style="color:#b4b4b4">^</i> <i style="color:#b5cea8">986477418</i> <i style="color:#b4b4b4">^</i> <i style="color:#b4b4b4">-</i><i style="color:#b5cea8">1733144731</i>;</span></div>
<div class="cl" style="top:151.0px;width:899px"><span class="n">103</span><span class="c" style="left:151.1px">}</span></div>
<div class="cl" style="top:164.0px;width:899px"><span class="n">104</span><span class="c" style="left:151.1px"><i style="color:#569cd6">string</i> text;</span></div>
<div class="cl" style="top:178.2px;width:899px"><span class="n">105</span><span class="c" style="left:151.1px"><i style="color:#569cd6">if</i> (num <i style="color:#b4b4b4">==</i> ((<i style="color:#b4b4b4">-</i><i style="color:#b5cea8">875836110</i> <i style="color:#b4b4b4">+</i> <i style="color:#b5cea8">893501597</i>) <i style="color:#b4b4b4">^</i> <i style="color:#b5cea8">1448366073</i>))</span></div>
<div class="cl" style="top:189.8px;width:899px"><span class="n">106</span><span class="c" style="left:151.1px">{</span></div>
<div class="cl" style="top:202.8px;width:899px"><span class="n">107</span><span class="c" style="left:174.2px">text <i style="color:#b4b4b4">=</i> <i style="color:#4ec9b0">gsXRRXlxFPrzcXpGuNToqlOWriJBQ</i>.<i style="color:#ee8216">MVNwJ</i>(<i style="color:#cfc9bd">"OQALBRUx"</i>) <i style="color:#b4b4b4">+</i> <i style="color:#4ec9b0">gsXRRXlxFPrzcXpGuNToqlOWriJBQ</i>.<i style="color:#ee8216">MVNwJ</i>(<i style="color:#cfc9bd">"HhcLDQ=="</i>);</span></div>
<div class="cl" style="top:216.8px;width:899px"><span class="n">108</span><span class="c" style="left:174.2px">num <i style="color:#b4b4b4">=</i> <i style="color:#b5cea8">105161930</i> <i style="color:#b4b4b4">^</i> <i style="color:#b4b4b4">-</i><i style="color:#b5cea8">876823621</i>;</span></div>
<div class="cl" style="top:228.5px;width:899px"><span class="n">109</span><span class="c" style="left:151.1px">}</span></div>
<div class="cl" style="top:241.3px;width:899px"><span class="n">110</span><span class="c" style="left:151.1px"><i style="color:#569cd6">if</i> (num <i style="color:#b4b4b4">==</i> <i style="color:#b4b4b4">-</i><i style="color:#b5cea8">1014108729</i>)</span></div>
<div class="cl" style="top:253.2px;width:899px"><span class="n">111</span><span class="c" style="left:151.1px">{</span></div>
<div class="cl" style="top:266.2px;width:899px"><span class="n">112</span><span class="c" style="left:174.2px"><i style="color:#569cd6">object</i> obj;</span></div>
<div class="cl" style="top:280.3px;width:899px"><span class="n">113</span><span class="c" style="left:174.2px"><i style="color:#3f9f88">Console</i>.<i style="color:#ee8216">WriteLine</i>(obj);</span></div>
<div class="cl" style="top:294.6px;width:899px"><span class="n">114</span><span class="c" style="left:174.2px">num <i style="color:#b4b4b4">=</i> <i style="color:#b5cea8">1224403534</i> <i style="color:#b4b4b4">^</i> <i style="color:#b4b4b4">-</i><i style="color:#b5cea8">1885407291</i>;</span></div>
<div class="cl" style="top:306.2px;width:899px"><span class="n">115</span><span class="c" style="left:151.1px">}</span></div>
<div class="cl" style="top:319.4px;width:899px"><span class="n">116</span><span class="c" style="left:151.1px"><i style="color:#569cd6">if</i> (num <i style="color:#b4b4b4">==</i> <i style="color:#b4b4b4">-</i><i style="color:#b5cea8">415148662</i>)</span></div>
<div class="cl" style="top:331.0px;width:899px"><span class="n">117</span><span class="c" style="left:151.1px">{</span></div>
<div class="cl" style="top:344.0px;width:899px"><span class="n">118</span><span class="c" style="left:174.2px"><i style="color:#4ec9b0">gsXRRXlxFPrzcXpGuNToqlOWriJBQ</i>.<i style="color:#ee8216">ZXbxOsxWdLyxkCZ</i>();</span></div>
<div class="cl" style="top:358.2px;width:899px"><span class="n">119</span><span class="c" style="left:174.2px">num <i style="color:#b4b4b4">=</i> <i style="color:#b5cea8">89299879</i> <i style="color:#b4b4b4">^</i> <i style="color:#b4b4b4">-</i><i style="color:#b5cea8">2097971306</i>;</span></div>
<div class="cl" style="top:369.7px;width:899px"><span class="n">120</span><span class="c" style="left:151.1px">}</span></div>
<div class="cl" style="top:382.7px;width:899px"><span class="n">121</span><span class="c" style="left:151.1px"><i style="color:#569cd6">if</i> (num <i style="color:#b4b4b4">==</i> <i style="color:#b5cea8">2084158728</i>)</span></div>
<div class="cl" style="top:394.2px;width:899px"><span class="n">122</span><span class="c" style="left:151.1px">{</span></div>
<div class="cl" style="top:407.5px;width:899px"><span class="n">123</span><span class="c" style="left:174.2px"><i style="color:#4ec9b0">gsXRRXlxFPrzcXpGuNToqlOWriJBQ</i>.<i style="color:#ee8216">OpAXCqPleqmArkqYsinlOgGN</i>();</span></div>
<div class="cl" style="top:421.6px;width:899px"><span class="n">124</span><span class="c" style="left:174.2px">num <i style="color:#b4b4b4">=</i> <i style="color:#b5cea8">250216664</i> <i style="color:#b4b4b4">^</i> <i style="color:#b5cea8">1348941400</i>;</span></div>
<div class="cl" style="top:433.1px;width:899px"><span class="n">125</span><span class="c" style="left:151.1px">}</span></div>
<div class="cl" style="top:446.2px;width:899px"><span class="n">126</span><span class="c" style="left:151.1px"><i style="color:#569cd6">if</i> (num <i style="color:#b4b4b4">==</i> <i style="color:#b5cea8">1908682172</i>)</span></div>
<div class="cl" style="top:458.0px;width:899px"><span class="n">127</span><span class="c" style="left:151.1px">{</span></div>
<div class="cl" style="top:471.2px;width:899px"><span class="n">128</span><span class="c" style="left:174.2px"><i style="color:#4ec9b0">zbztEI</i> zbztEI;</span></div>
<div class="cl" style="top:485.1px;width:899px"><span class="n">129</span><span class="c" style="left:174.2px">zbztEI.<i style="color:#ee8216">sJGtmwlvseyCRNI</i>();</span></div>
<div class="cl" style="top:499.1px;width:899px"><span class="n">130</span><span class="c" style="left:174.2px">num <i style="color:#b4b4b4">=</i> <i style="color:#b5cea8">1016897561</i> <i style="color:#b4b4b4">^</i> <i style="color:#b5cea8">1808097839</i>;</span></div>
<div class="cl" style="top:510.8px;width:899px"><span class="n">131</span><span class="c" style="left:151.1px">}</span></div>
<div class="cl" style="top:523.8px;width:899px"><span class="n">132</span><span class="c" style="left:151.1px"><i style="color:#569cd6">if</i> (num <i style="color:#b4b4b4">==</i> <i style="color:#b4b4b4">-</i><i style="color:#b5cea8">949740149</i>)</span></div>
<div class="cl" style="top:535.4px;width:899px"><span class="n">133</span><span class="c" style="left:151.1px">{</span></div>
<div class="cl" style="top:548.8px;width:899px"><span class="n">134</span><span class="c" style="left:174.2px"><i style="color:#3f9f88">Console</i>.<i style="color:#ee8216">WriteLine</i>(<i style="color:#4ec9b0">gsXRRXlxFPrzcXpGuNToqlOWriJBQ</i>.<i style="color:#ee8216">MVNwJ</i>(<i style="color:#cfc9bd">"Ew=="</i>) <i style="color:#b4b4b4">+</i> <i style="color:#4ec9b0">gsXRRXlxFPrzcXpGuNToqlOWriJBQ</i>.<i style="color:#ee8216">MVNwJ</i>(<i style="color:#cfc9bd">"HgoL"</i>) <i style="color:#b4b4b4">+</i></span></div>
<div class="cl" style="top:562.6px;width:899px"><span class="c" style="left:185.7px">(<i style="color:#4ec9b0">gsXRRXlxFPrzcXpGuNToqlOWriJBQ</i>.<i style="color:#ee8216">JNQBLaBnIuCMewxXsFdYOjH</i>() <i style="color:#b4b4b4">!=</i> <i style="color:#569cd6">null</i>).<i style="color:#ee8216">ToString</i>() <i style="color:#b4b4b4">+</i> <i style="color:#569cd6">new</i> <i style="color:#4ec9b0">zbztEI</i>().<i style="color:#ee8216">sJGtmwlvseyCRNI</i>().<i style="color:#ee8216">ToString</i>());</span></div>
<div class="cl" style="top:576.8px;width:899px"><span class="n">135</span><span class="c" style="left:174.2px">num <i style="color:#b4b4b4">=</i> <i style="color:#b5cea8">1510817391</i> <i style="color:#b4b4b4">^</i> <i style="color:#b5cea8">640975719</i>;</span></div>
<div class="cl" style="top:588.2px;width:899px"><span class="n">136</span><span class="c" style="left:151.1px">}</span></div>
<div class="cl" style="top:601.2px;width:899px"><span class="n">137</span><span class="c" style="left:151.1px"><i style="color:#569cd6">if</i> (num <i style="color:#b4b4b4">==</i> <i style="color:#b4b4b4">-</i><i style="color:#b5cea8">839377039</i>)</span></div>
<div class="cl" style="top:612.8px;width:899px"><span class="n">138</span><span class="c" style="left:151.1px">{</span></div>
</div>
<div style="left:0;top:651.4px;width:482px;height:2px;background:#262628"></div>
<div style="left:1364.8px;top:0;width:1.2px;height:653px;background:#1d1d1e"></div>
</body></html>
